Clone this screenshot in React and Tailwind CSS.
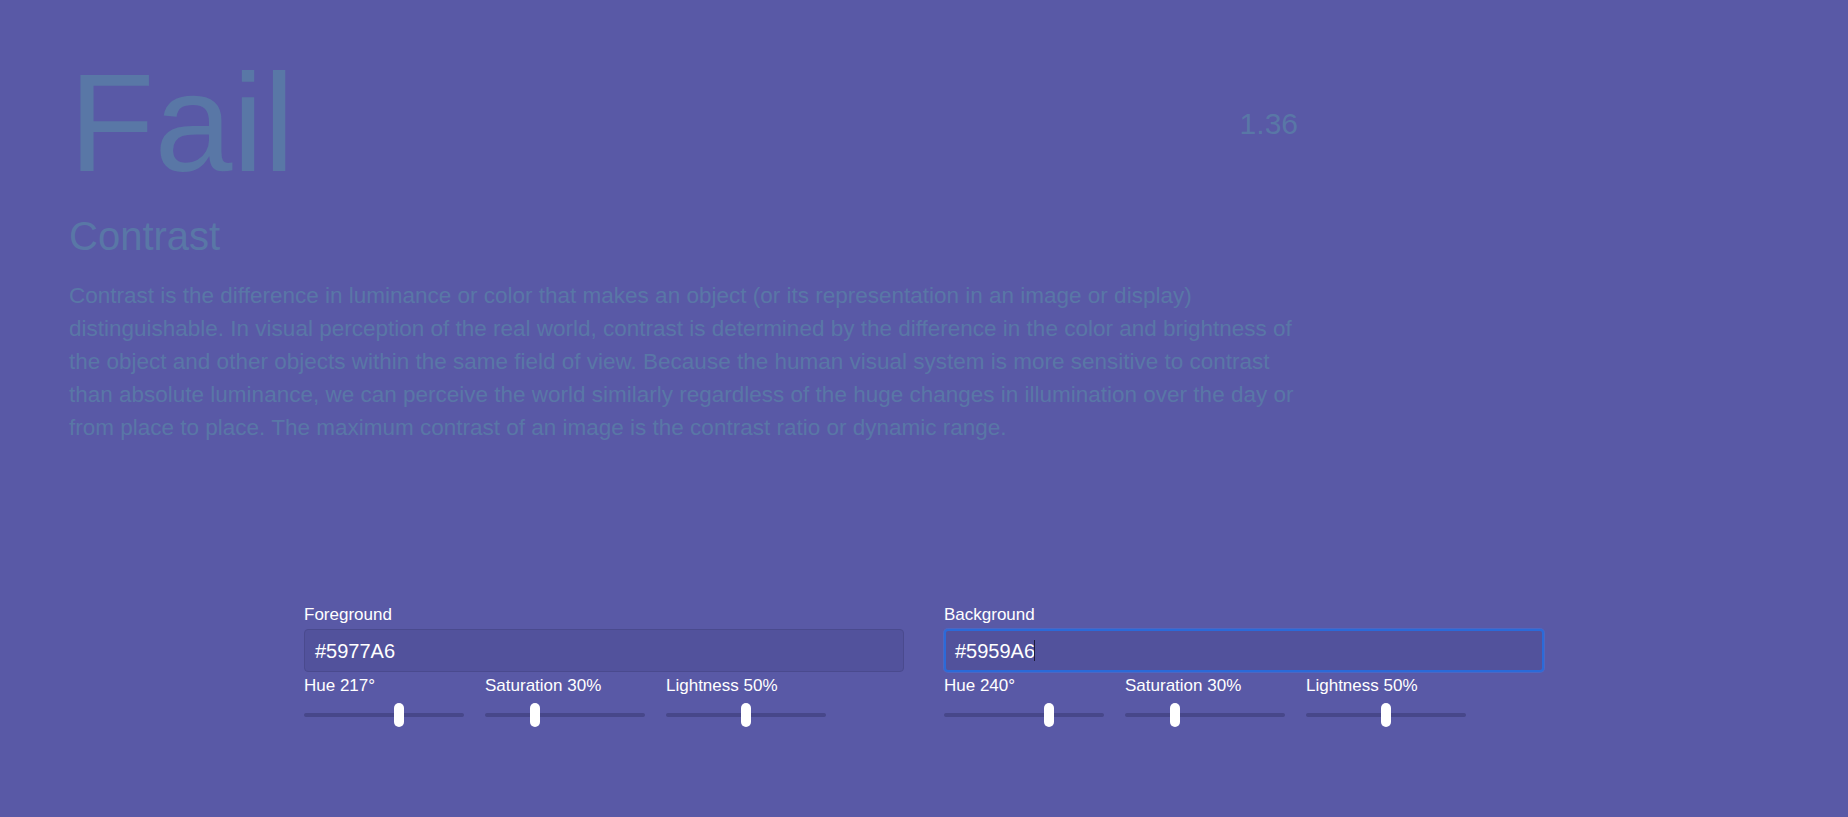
import React from 'react';

const colors = [
  { label: 'Foreground', hex: '#5977A6', hue: 217, sat: 30, light: 50, focused: false },
  { label: 'Background', hex: '#5959A6', hue: 240, sat: 30, light: 50, focused: true },
];

function Slider({ label, fraction }) {
  return (
    <div className="w-[160px]">
      <div className="text-[17px] leading-[24px] text-white">{label}</div>
      <div className="relative mt-[5px] h-[24px] flex items-center">
        <div className="h-[4px] w-full rounded-full bg-[#47478a]" />
        {/* thumb */}
        <div
          className="absolute top-0 h-[24px] w-[10px] rounded-[5px] bg-white"
          style={{ left: `${fraction * 150}px` }}
        />
      </div>
    </div>
  );
}

function ColorControl({ color }) {
  return (
    <div>
      <div className="text-[17px] leading-[24px] text-white">{color.label}</div>
      <div
        className={
          color.focused
            ? 'mt-[2px] flex h-[43px] items-center rounded-[4px] border-2 border-[#2b6ad8] bg-[#52529c] px-[9px] text-[20px] text-white shadow-[0_0_0_1px_rgba(60,120,230,0.45)]'
            : 'mt-[2px] flex h-[43px] items-center rounded-[4px] border border-[#4a4a8e] bg-[#52529c] px-[10px] text-[20px] text-white'
        }
      >
        <span>{color.hex}</span>
        {color.focused && <span className="ml-[-1px] h-[21px] w-px bg-[#1b1b3a]" />}
      </div>
      <div className="mt-[2px] flex gap-[21px]">
        <Slider label={`Hue ${color.hue}°`} fraction={color.hue / 360} />
        <Slider label={`Saturation ${color.sat}%`} fraction={color.sat / 100} />
        <Slider label={`Lightness ${color.light}%`} fraction={color.light / 100} />
      </div>
    </div>
  );
}

export default function App() {
  return (
    <div className="min-h-screen bg-[#5959A6] pt-[53px] pb-[60px] font-['Liberation_Sans',Arial,sans-serif]">
      <div className="ml-[69px] w-[1229px] text-[#5977A6]">
        <div className="flex h-[140px] items-center justify-between">
          <h1 className="text-[140px] leading-none">Fail</h1>
          <div className="text-[30px]">1.36</div>
        </div>
        <h2 className="mt-[20px] text-[40px] leading-[46px]">Contrast</h2>
        <p className="mt-[20px] text-[22.5px] leading-[33px]">
          Contrast is the difference in luminance or color that makes an object (or its representation in an image
          or display) distinguishable. In visual perception of the real world, contrast is determined by the
          difference in the color and brightness of the object and other objects within the same field of view.
          Because the human visual system is more sensitive to contrast than absolute luminance, we can perceive the
          world similarly regardless of the huge changes in illumination over the day or from place to place. The
          maximum contrast of an image is the contrast ratio or dynamic range.
        </p>
      </div>

      <div className="mx-auto mt-[159px] grid w-[1240px] grid-cols-2 gap-[40px]">
        {colors.map((c) => (
          <ColorControl key={c.label} color={c} />
        ))}
      </div>
    </div>
  );
}
